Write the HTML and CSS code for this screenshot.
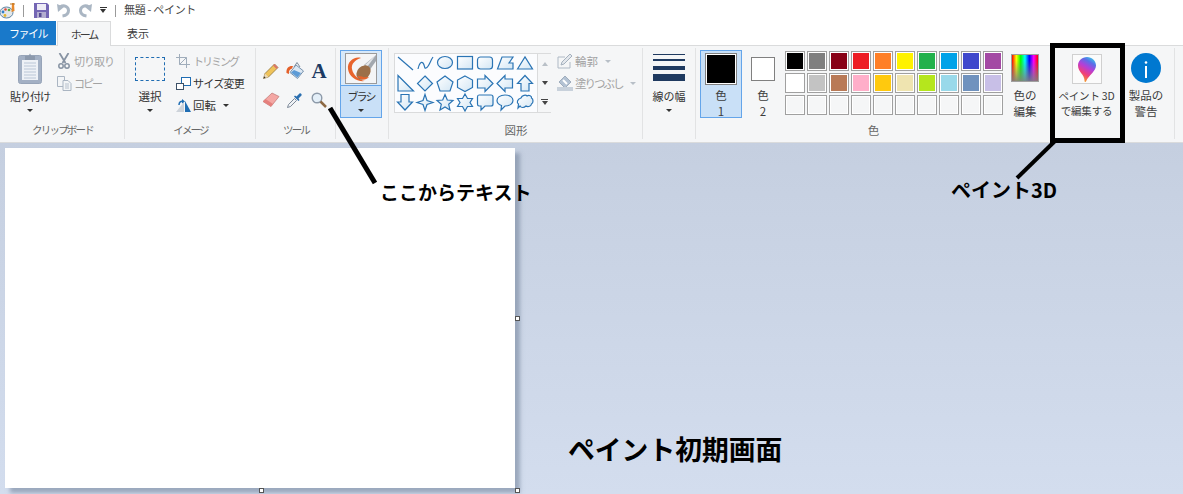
FILE: index.html
```html
<!DOCTYPE html>
<html lang="ja">
<head>
<meta charset="utf-8">
<title>無題 - ペイント</title>
<link rel="stylesheet" href="styles.css">
</head>
<body>
<div class="app">
  <header class="titlebar">
    <svg class="qa-icon" width="16" height="17" viewBox="0 0 16 17"><ellipse cx="6.500" cy="10.500" rx="6.500" ry="5.500" fill="#e3e6e8" stroke="#5f86a6"/><circle cx="3" cy="10" r="1.400" fill="#2f80c8"/><circle cx="5.500" cy="7.500" r="1.300" fill="#e04a3a"/><circle cx="9" cy="8" r="1.300" fill="#5aa83c"/><circle cx="5" cy="13.500" r="1.400" fill="#e3b52c"/><path d="M12 1l2 0 .5 8-3 1z" fill="#e8892b"/><path d="M10 2h5" stroke="#b7792b"/></svg>
    <span class="qa-sep qa-sep-a"></span>
    <svg class="qa-save" width="15" height="15" viewBox="0 0 15 15"><path d="M0 0h13l2 2v13H0z" fill="#7466b4"/><rect x="3" y="1" width="9" height="6" fill="#eeecf6"/><rect x="3" y="9" width="9" height="6" fill="#b3add0"/><rect x="5" y="10" width="2.500" height="4" fill="#554b92"/></svg>
    <svg class="qa-undo" width="14" height="15" viewBox="0 0 14 15"><path d="M3 4c4-2.500 8.500-.5 8.500 3.500 0 3-2.500 5-6 5.500" fill="none" stroke="#aab6c3" stroke-width="3"/><path d="M0 1l1 8 6-5z" fill="#aab6c3"/></svg>
    <svg class="qa-redo" width="14" height="15" viewBox="0 0 14 15"><path d="M11 4C7 1.500 2.500 3.500 2.500 7.500c0 3 2.500 5 6 5.500" fill="none" stroke="#aab6c3" stroke-width="3"/><path d="M14 1l-1 8-6-5z" fill="#aab6c3"/></svg>
    <span class="qa-more"></span>
    <span class="qa-sep qa-sep-b"></span>
    <span class="title-text">無題 - ペイント</span>
  </header>

  <nav class="tabs">
    <span class="tab tab-file">ファイル</span>
    <span class="tab tab-home">ホーム</span>
    <span class="tab tab-view">表示</span>
  </nav>

  <section class="ribbon">
    <div class="group g-clip">
      <div class="group-body">
        <div class="big-btn paste">
          <svg width="24" height="31" viewBox="0 0 24 31"><rect x=".5" y="2.500" width="23" height="28" rx="2" fill="#a3b0c4" stroke="#97a4b8"/><rect x="4" y="7" width="16" height="20" fill="#eef1f6"/><path d="M6 10h12M6 13h12M6 16h12M6 19h12M6 22h12M6 25h12" stroke="#bac6d6"/><path d="M7 7V3h3.500L12 .5 13.500 3H17v4z" fill="#8c99ac"/></svg>
          <span class="btn-label k1">貼り付け</span>
          <span class="caret"></span>
        </div>
        <div class="small-col col-clip">
          <div class="small-item off"><span class="ico"><svg width="12" height="16" viewBox="0 0 12 16"><path d="M1.500 0l6 10M10.500 0l-6 10" stroke="#8793a3" stroke-width="1.800" fill="none"/><circle cx="3" cy="13" r="2.200" fill="none" stroke="#8793a3" stroke-width="1.500"/><circle cx="9" cy="13" r="2.200" fill="none" stroke="#8793a3" stroke-width="1.500"/></svg></span><span class="k1">切り取り</span></div>
          <div class="small-item off"><span class="ico"><svg width="15" height="15" viewBox="0 0 15 15"><path d="M.5.5h7v10h-7z" fill="#f3f5f7" stroke="#aab5c2"/><path d="M6 4.500h5l3 3v7H6z" fill="#f3f5f7" stroke="#aab5c2"/><path d="M8 8h4M8 10h4M8 12h4" stroke="#b6c0cc"/></svg></span><span class="k2">コピー</span></div>
        </div>
      </div>
      <div class="group-label k-label">クリップボード</div>
    </div>

    <div class="group g-image">
      <div class="group-body">
        <div class="big-btn select">
          <span class="select-box"></span>
          <span class="btn-label">選択</span>
          <span class="caret"></span>
        </div>
        <div class="small-col col-image">
          <div class="small-item off"><span class="ico"><svg width="14" height="14" viewBox="0 0 14 14"><path d="M3.500 0v10.500H14M0 3.500h10.500V14" fill="none" stroke="#a0adbb"/><path d="M3.500 10.500l7-7" stroke="#a0adbb"/></svg></span><span class="k2">トリミング</span></div>
          <div class="small-item"><span class="ico"><svg width="15" height="13" viewBox="0 0 15 13"><rect x="5.500" y=".5" width="9" height="8" fill="#fff" stroke="#1f6db3"/><rect x=".5" y="6.500" width="7" height="6" fill="#fff" stroke="#3e5268"/></svg></span><span class="k07">サイズ変更</span></div>
          <div class="small-item"><span class="ico"><svg width="15" height="13" viewBox="0 0 15 13"><path d="M8 3v10H0z" fill="#cdd3da"/><path d="M9 2l6 11H9z" fill="#1f6db3"/><path d="M3 6c0-3 2-4 4-3.500" fill="none" stroke="#1f6db3" stroke-width="1.500"/><path d="M6 0l3 2.500-3 2z" fill="#1f6db3"/></svg></span><span>回転</span><span class="caret inline"></span></div>
        </div>
      </div>
      <div class="group-label k-label">イメージ</div>
    </div>

    <div class="group g-tools">
      <div class="group-body tool-grid">
        <svg width="16" height="16" viewBox="0 0 16 16"><path d="M.5 15.500l1.500-5L11.500 1l3.500 3.500-9.500 9.500z" fill="#efc35a" stroke="#86692f" stroke-width=".7"/><path d="M.5 15.500l1.500-5 3.500 3.500z" fill="#ecd9b6"/><path d="M.5 15.500l.7-2.200 1.500 1.500z" fill="#333"/><path d="M11.500 1l3.500 3.500-1.500 1.500L10 2.500z" fill="#d9776b"/></svg>
        <svg width="18" height="17" viewBox="0 0 18 17"><path d="M10 3l7.500 6-6 7.500-7.500-6z" fill="#dce8f3" stroke="#7792ad"/><path d="M5 10.500l6.500 5 3.500-4.500-7-3z" fill="#5d9bd6"/><path d="M8 5L11 .5 14 5" fill="none" stroke="#7b8a9b"/><path d="M7 4C3 3.500 0 6 .5 11l2.500 1c-.5-3 1-5 3-5.500z" fill="#e4602a"/></svg>
        <span class="text-tool">A</span>
        <svg width="18" height="15" viewBox="0 0 18 15"><path d="M1 9.500L10 1l7 3.500-8 10z" fill="#f4a7a4" stroke="#bd7572" stroke-width=".7"/><path d="M1 9.500l8 5 2-2.500-7.500-5z" fill="#e5807d"/></svg>
        <svg width="16" height="16" viewBox="0 0 16 16"><path d="M.5 15.500l1-3 6-6 2 2-6 6z" fill="#eef1f5" stroke="#6f7d8d" stroke-width=".9"/><path d="M7 4.500l4.500 4.500 1-1-1-1.500 3-3c.8-1-1-3-2-2l-3 3-1.500-1z" fill="#2a6fb0"/></svg>
        <svg width="16" height="16" viewBox="0 0 16 16"><circle cx="6" cy="6" r="4.800" fill="#e4eff8" stroke="#8d9aa9" stroke-width="1.400"/><path d="M9.500 9.500l5.500 5.500" stroke="#8d6a45" stroke-width="2.500"/></svg>
      </div>
      <div class="group-label k-label">ツール</div>
    </div>

    <div class="group g-brush">
      <div class="group-body">
        <div class="brush-btn">
          <div class="brush-top">
            <svg width="32" height="31" viewBox="0 0 32 31"><rect x=".5" y=".5" width="31" height="30" fill="#f4f5f6" stroke="#9a9a9a"/><path d="M31 2L19 12l5 6L31 8z" fill="#a2a8af"/><path d="M31 2L20 12l2 2z" fill="#e4e7ea"/><path d="M16 5C9 3 2 9 3 16c1 8 9 13 17 12-6-1-12-6-13-12C6 11 10 7 16 5z" fill="#e8642c"/><ellipse cx="18.500" cy="19.500" rx="8" ry="6.200" transform="rotate(-45 18.500 19.500)" fill="#9c7049"/><path d="M12 23c3 4 8 5 12 1-2 0-5 1-7-.5z" fill="#e8642c"/></svg>
          </div>
          <div class="brush-bottom">
            <span class="btn-label k2">ブラシ</span>
            <span class="caret"></span>
          </div>
        </div>
      </div>
      <div class="group-label"></div>
    </div>

    <div class="group g-shapes">
      <div class="group-body">
        <div class="gallery">
          <svg class="shapes" width="143" height="58" viewBox="0 0 143 58" fill="url(#sfill)" stroke="#2a74b4" stroke-width="1.200">
            <defs><linearGradient id="sfill" x1="0" y1="0" x2="1" y2="1"><stop offset="0" stop-color="#fff"/><stop offset="1" stop-color="#d3e6f4"/></linearGradient></defs>
            <path d="M3 3l15 13" fill="none"/>
            <path d="M23 15c1-5 3-8 5-6s1 6 3 5c3-1 4-7 7-11" fill="none"/>
            <ellipse cx="50" cy="8.500" rx="7.500" ry="6"/>
            <rect x="62.500" y="2.500" width="15" height="12.500"/>
            <rect x="82.500" y="3" width="15" height="12" rx="3"/>
            <path d="M102.500 15L107 3h11l-4 6h4v6z"/>
            <path d="M122.500 15L130 3l7.500 12z"/>
            <path d="M3 21.500V37h15.500z"/>
            <path d="M30 22l7.500 7.500L30 37l-7.500-7.500z"/>
            <path d="M50 22l8 6-3 9H45l-3-9z"/>
            <path d="M70 22l7.500 4v7.500L70 37.500l-7.500-4V26z"/>
            <path d="M82.500 25H90v-3.500l8 8-8 8V34h-7.500z"/>
            <path d="M117.500 25H110v-3.500l-8 8 8 8V34h7.500z"/>
            <path d="M130 21.500l7.500 8H134V37h-8v-7.500h-3.500z"/>
            <path d="M6 40.500h8V48h3.500L10 56l-7.500-8H6z"/>
            <path d="M30 40.500l2 6 6 2-6 2-2 6-2-6-6-2 6-2z"/>
            <path d="M50 40.500l2.300 5.500 5.700.5-4.300 3.800L55 56l-5-3-5 3 1.300-5.700-4.300-3.800 5.700-.5z"/>
            <path d="M70 40l2.500 4.500h5L75 48.500l2.500 4h-5L70 57l-2.500-4.500h-5l2.500-4-2.500-4h5z"/>
            <path d="M84 41h12q2 0 2 2v7q0 2-2 2h-6l-4 4v-4h-2q-1.500 0-1.500-2v-7q0-2 1.500-2z"/>
            <path d="M110 41c5 0 8 2.500 8 5.500s-3 5.500-8 5.500l-4 4 .5-4.500C103.500 50.500 102 49 102 46.500c0-3 3-5.500 8-5.500z"/>
            <path d="M126 44c1-3 5-3.500 6-2 2-1.500 5 0 4.500 2 2 1 2 5 0 6-.5 3-4.500 3-5.500 2-2 2-5 2-6 0l-2 2 .5-4c-2-1-1.500-5 2.500-6z"/>
          </svg>
          <div class="gallery-scroll">
            <span class="sc-btn"><i class="up"></i></span>
            <span class="sc-btn"><i class="down"></i></span>
            <span class="sc-btn"><i class="bar"></i><i class="down"></i></span>
          </div>
        </div>
        <div class="small-col col-shapes">
          <div class="small-item off"><span class="ico"><svg width="16" height="16" viewBox="0 0 16 16"><path d="M1 15V4h7M13 9v6H1" fill="none" stroke="#aeb9c5"/><path d="M4 12l1-3 8-8 2 2-8 8z" fill="#e3e7ec" stroke="#a5b1be"/></svg></span><span>輪郭</span><span class="caret inline light"></span></div>
          <div class="small-item off"><span class="ico"><svg width="16" height="16" viewBox="0 0 16 16"><path d="M8 1l6 6-6 6-6-6z" fill="#b3c2d3" stroke="#9fadbd"/><path d="M0 12h16v4H0z" fill="#c8d1db"/><path d="M6 5l4 4" stroke="#fff" stroke-width="2"/></svg></span><span class="k2">塗りつぶし</span><span class="caret inline light"></span></div>
        </div>
      </div>
      <div class="group-label label-kanji">図形</div>
    </div>

    <div class="group g-width">
      <div class="group-body">
        <div class="big-btn width-btn">
          <div class="width-lines"><i class="w1"></i><i class="w2"></i><i class="w3"></i><i class="w4"></i></div>
          <span class="btn-label">線の幅</span>
          <span class="caret"></span>
        </div>
      </div>
      <div class="group-label"></div>
    </div>

    <div class="group g-colors">
      <div class="group-body">
        <div class="color-sel active">
          <span class="swatch-big"></span>
          <span class="two-line">色<br>1</span>
        </div>
        <div class="color-sel second">
          <span class="swatch-mid"></span>
          <span class="two-line">色<br>2</span>
        </div>
        <div class="palette">
          <i class="c" style="background:#000"></i><i class="c" style="background:#7f7f7f"></i><i class="c" style="background:#880015"></i><i class="c" style="background:#ed1c24"></i><i class="c" style="background:#ff7f27"></i><i class="c" style="background:#fff200"></i><i class="c" style="background:#22b14c"></i><i class="c" style="background:#00a2e8"></i><i class="c" style="background:#3f48cc"></i><i class="c" style="background:#a349a4"></i>
          <i class="c" style="background:#fff"></i><i class="c" style="background:#c3c3c3"></i><i class="c" style="background:#b97a57"></i><i class="c" style="background:#ffaec9"></i><i class="c" style="background:#ffc90e"></i><i class="c" style="background:#efe4b0"></i><i class="c" style="background:#b5e61d"></i><i class="c" style="background:#99d9ea"></i><i class="c" style="background:#7092be"></i><i class="c" style="background:#c8bfe7"></i>
          <i class="c"></i><i class="c"></i><i class="c"></i><i class="c"></i><i class="c"></i><i class="c"></i><i class="c"></i><i class="c"></i><i class="c"></i><i class="c"></i>
        </div>
        <div class="edit-colors">
          <span class="rainbow"></span>
          <span class="two-line">色の<br>編集</span>
        </div>
      </div>
      <div class="group-label label-kanji">色</div>
    </div>

    <div class="group g-3d">
      <div class="group-body column">
        <span class="icon-3d">
          <svg width="18" height="25" viewBox="0 0 18 25"><defs><linearGradient id="drop" x1=".8" y1="0" x2=".35" y2="1"><stop offset="0" stop-color="#35d0e8"/><stop offset=".22" stop-color="#5a6ee8"/><stop offset=".45" stop-color="#b43fd8"/><stop offset=".72" stop-color="#f03f7a"/><stop offset="1" stop-color="#f5a020"/></linearGradient></defs><path d="M9 0c5 0 9 4 9 8.500 0 6-7 9-10 16-.5.700-1.500.5-1.500-.5C7 18 0 15 0 8.500 0 4 4 0 9 0z" fill="url(#drop)"/></svg>
        </span>
        <span class="two-line">ペイント 3D<br>で編集する</span>
      </div>
    </div>

    <div class="group g-notice">
      <div class="group-body column">
        <svg class="info" width="30" height="30" viewBox="0 0 30 30"><circle cx="15" cy="15" r="15" fill="#0078d0"/><circle cx="15" cy="9.500" r="1.300" fill="#fff"/><rect x="14" y="13" width="2" height="12" fill="#fff"/></svg>
        <span class="two-line">製品の<br>警告</span>
      </div>
    </div>
  </section>

  <main class="workspace">
    <div class="canvas">
      <i class="handle h-right"></i>
      <i class="handle h-bottom"></i>
      <i class="handle h-corner"></i>
    </div>
  </main>

  <svg class="annot-lines" width="1183" height="494" viewBox="0 0 1183 494">
    <path d="M330 108l45 75" stroke="#000" stroke-width="5" fill="none"/>
    <path d="M1055 141l-38 37" stroke="#000" stroke-width="4" fill="none"/>
  </svg>
  <div class="annot-box"></div>
  <span class="annot a-text">ここからテキスト</span>
  <span class="annot a-3d">ペイント3D</span>
  <span class="annot a-init">ペイント初期画面</span>
</div>
</body>
</html>
```
FILE: styles.css
```css
* { box-sizing: border-box; }
html, body { margin: 0; padding: 0; height: 100%; overflow: hidden; }
body { font-family: "Noto Sans CJK JP", "Noto Sans", sans-serif; font-size: 11px; color: #3c3c3c; background: #fff; }
.app { position: relative; width: 1183px; height: 494px; display: flex; flex-direction: column; overflow: hidden; }
svg { display: block; flex: none; }

.k07 { letter-spacing: -.7px; }
.k1 { letter-spacing: -1px; }
.k2 { letter-spacing: -2px; }

.titlebar { height: 21px; display: flex; align-items: center; background: #fff; flex: none; }
.qa-sep { width: 1px; height: 12px; background: #9a9a9a; flex: none; }
.qa-sep-a { margin-left: 7px; }
.qa-save { margin-left: 10px; }
.qa-undo { margin-left: 8px; }
.qa-redo { margin-left: 7px; }
.qa-more { width: 7px; height: 7px; margin-left: 8px; border-top: 1px solid #333; position: relative; flex: none; }
.qa-more::after { content: ""; position: absolute; left: 0; top: 1px; border: 3.500px solid transparent; border-top: 4px solid #333; border-bottom: 0; }
.qa-sep-b { margin-left: 8px; }
.title-text { margin-left: 8px; margin-bottom: 2px; font-size: 11px; letter-spacing: -.3px; color: #444; line-height: 1; white-space: nowrap; }

.tabs { height: 24px; display: flex; align-items: stretch; background: #fff; position: relative; flex: none; }
.tab { display: flex; align-items: center; justify-content: center; font-size: 11px; }
.tab-file { width: 56px; background: #1979ca; color: #fff; letter-spacing: -1.500px; }
.tab-home { width: 54px; margin-left: 1px; background: #f5f6f7; border: 1px solid #dadbdc; border-bottom: 0; position: relative; z-index: 1; height: 25px; letter-spacing: -2px; }
.tab-view { width: 54px; }

.ribbon { height: 98px; flex: none; display: flex; background: #f5f6f7; border-top: 1px solid #dadbdc; border-bottom: 1px solid #dadbdc; }
.group { display: flex; flex-direction: column; padding-top: 4px; padding-bottom: 3px; position: relative; flex: none; }
.group::after { content: ""; position: absolute; right: 0; top: 2px; bottom: 3px; width: 1px; background: #e2e3e4; }
.group-body { flex: 1; display: flex; min-height: 0; }
.group-label { height: 18px; text-align: center; font-size: 10.500px; color: #666; line-height: 18px; flex: none; white-space: nowrap; }
.k-label { letter-spacing: -1.800px; }
.label-kanji { font-size: 11.500px; }
.g-clip { width: 125px; }
.g-image { width: 131px; }
.g-tools { width: 80px; }
.g-brush { width: 53px; }
.g-shapes { width: 254px; }
.g-width { width: 53px; }
.g-colors { width: 355px; }
.g-3d { width: 71px; }
.g-notice { width: 53px; padding-right: 5px; }
.g-colors::after, .g-3d::after { display: none; }

.big-btn { display: flex; flex-direction: column; align-items: center; flex: none; }
.btn-label { font-size: 11px; line-height: 16px; color: #333; white-space: nowrap; }
.caret { width: 0; height: 0; border: 3px solid transparent; border-top: 3.500px solid #333; border-bottom: 0; margin-top: 5px; flex: none; }
.caret.inline { margin: 0 0 0 5px; }
.caret.light { border-top-color: #b8bfc7; }

.paste { width: 44px; margin-left: 8px; padding-top: 3px; }
.paste .btn-label { margin-top: 4px; }
.small-col { display: flex; flex-direction: column; flex: none; }
.small-item { height: 22px; display: flex; align-items: center; gap: 2px; font-size: 11px; color: #333; white-space: nowrap; }
.small-item.off { color: #a3a3a3; }
.ico { width: 16px; display: flex; justify-content: center; align-items: center; flex: none; }
.col-clip { margin-left: 4px; }
.select { width: 36px; margin-left: 7px; padding-top: 7px; }
.select-box { width: 30px; height: 24px; border: 1px dashed #1f6db3; flex: none; }
.select .btn-label { margin-top: 7px; font-size: 11.500px; }
.col-image { margin-left: 7px; }
.col-image .small-item:last-child { font-size: 11.500px; }

.tool-grid { display: grid; grid-template-columns: repeat(3, 24px); grid-auto-rows: 29px; justify-items: center; align-items: center; margin-left: 3px; padding-top: 6px; align-content: start; }
.text-tool { font-family: "Liberation Serif", serif; font-weight: 700; font-size: 21px; line-height: 20px; color: #1c3a63; }

.brush-btn { margin-left: 4px; width: 42px; height: 68px; border: 1px solid #64a5ea; background: #c9e0f7; display: flex; flex-direction: column; }
.brush-top { height: 35px; padding: 2px 4px 0; background: #d8e9f9; border-bottom: 1px solid #64a5ea; flex: none; }
.brush-bottom { display: flex; flex-direction: column; align-items: center; padding-top: 2px; }

.gallery { width: 157px; height: 60px; margin-left: 5px; margin-top: 3px; display: flex; border: 1px solid #dadbdc; background: #fbfcfe; flex: none; }
.gallery-scroll { width: 14px; margin-left: -1px; border-left: 1px solid #dadbdc; background: #f5f6f7; display: flex; flex-direction: column; flex: none; }
.sc-btn { flex: 1; display: flex; flex-direction: column; align-items: center; justify-content: center; gap: 1px; }
.sc-btn i { display: block; }
.sc-btn .up { border: 3.500px solid transparent; border-bottom: 4px solid #b9c0c7; border-top: 0; }
.sc-btn .down { border: 3.500px solid transparent; border-top: 4px solid #444; border-bottom: 0; }
.sc-btn .bar { width: 7px; height: 1px; background: #444; }
.col-shapes { margin-left: 6px; }
.col-shapes .small-item { font-size: 11.500px; }

.width-btn { width: 52px; padding-top: 4px; }
.width-lines { width: 32px; height: 27px; display: flex; flex-direction: column; justify-content: space-between; margin-bottom: 7px; flex: none; }
.width-lines i { display: block; background: #1f3a60; }
.w1 { height: 1px; } .w2 { height: 2px; } .w3 { height: 4px; } .w4 { height: 7px; }

.color-sel { width: 42px; height: 68px; display: flex; flex-direction: column; align-items: center; flex: none; }
.color-sel.active { margin-left: 4px; background: #c9e0f7; border: 1px solid #64a5ea; padding-top: 2px; }
.swatch-big { width: 32px; height: 32px; background: #000; border: 1px solid #808080; outline: 1px solid #fff; outline-offset: -2px; flex: none; }
.color-sel .two-line { margin-top: 3px; }
.active .two-line { margin-top: 2px; }
.second { margin-left: 0; padding-top: 7px; }
.swatch-mid { width: 24px; height: 24px; background: #fff; border: 1px solid #808080; flex: none; }
.second .two-line { margin-top: 6px; }
.two-line { font-size: 11.500px; line-height: 16px; text-align: center; color: #3c3c3c; white-space: nowrap; }

.palette { display: grid; grid-template-columns: repeat(10, 20px); grid-auto-rows: 20px; gap: 2px; margin-left: 1px; margin-top: 1px; flex: none; align-content: start; }
.c { display: block; border: 1px solid #a0a0a0; outline: 1px solid #fff; outline-offset: -2px; }
.edit-colors { width: 44px; margin-left: 0; display: flex; flex-direction: column; align-items: center; padding-top: 4px; flex: none; }
.rainbow { width: 28px; height: 28px; border: 1px solid #a0a0a0; background: linear-gradient(transparent 20%, rgba(128,128,128,.9) 100%), linear-gradient(90deg, #f00, #ff0, #0f0, #0ff, #00f, #f0f, #f00); flex: none; }
.edit-colors .two-line { margin-top: 5px; }

.column { flex-direction: column; align-items: center; }
.icon-3d { width: 30px; height: 30px; margin-top: 4px; border: 1px solid #d0d0d0; background: #fbfbfb; display: flex; align-items: center; justify-content: center; flex: none; }
.g-3d .two-line { margin-top: 4px; font-size: 10.500px; line-height: 15px; letter-spacing: -.2px; }
.info { margin-top: 3px; }
.g-notice .two-line { margin-top: 4px; }

.workspace { flex: 1; min-height: 0; padding: 5px 0 0 5px; background: linear-gradient(#c5cfe0, #d3ddee); overflow: hidden; }
.canvas { position: relative; width: 510px; height: 340px; background: #fff; box-shadow: 5px 5px 4px rgba(110,125,150,.55); }
.handle { position: absolute; width: 5px; height: 5px; background: #fff; border: 1px solid #555; }
.h-right { right: -5px; top: 168px; }
.h-bottom { left: 254px; bottom: -5px; }
.h-corner { right: -5px; bottom: -5px; }

.annot-lines { position: absolute; left: 0; top: 0; pointer-events: none; }
.annot-box { position: absolute; left: 1050px; top: 43px; width: 75px; height: 100px; border: 5px solid #000; }
.annot { position: absolute; color: #000; font-weight: 700; white-space: nowrap; line-height: 1; }
.a-text { left: 380px; top: 182px; font-size: 19px; }
.a-3d { left: 951px; top: 180px; font-size: 20px; }
.a-init { left: 568px; top: 436px; font-size: 26.800px; }
```
